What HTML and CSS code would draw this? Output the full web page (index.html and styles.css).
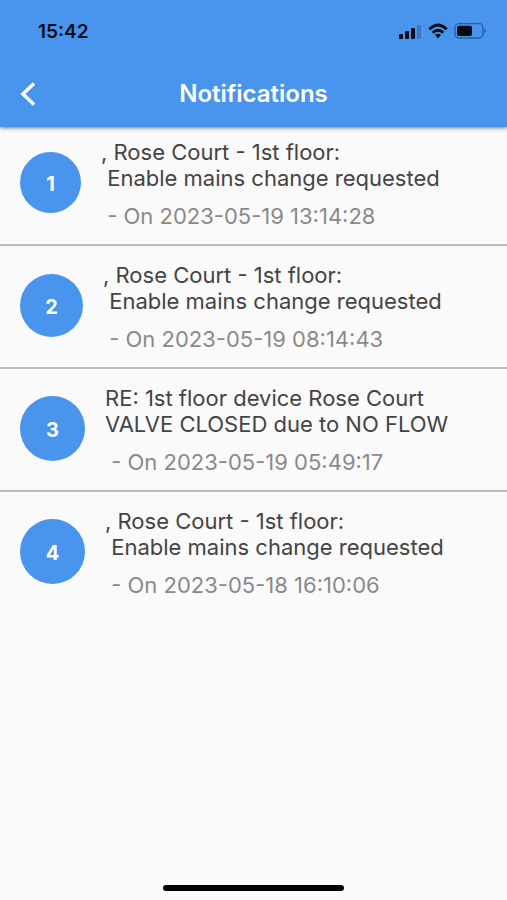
FILE: index.html
```html
<!DOCTYPE html>
<html lang="en">
<head>
<meta charset="utf-8">
<meta name="viewport" content="width=device-width, initial-scale=1">
<title>Notifications</title>
<link rel="stylesheet" href="styles.css">
</head>
<body>
<header class="top">
  <div class="status">
    <time class="clock">15:42</time>
    <div class="indicators">
      <svg width="24" height="16" viewBox="0 0 24 16" aria-hidden="true"><rect x="1" y="11" width="4" height="5" rx="1"/><rect x="7" y="8" width="4" height="8" rx="1"/><rect x="13" y="5" width="4" height="11" rx="1"/><rect x="19" y="2" width="4" height="14" rx="1" opacity=".2"/></svg>
      <svg width="20" height="16" viewBox="0 0 20 16" aria-hidden="true"><path d="M1.300 6.200Q10-2.200 18.700 6.200M4.700 9.700Q10 4.800 15.300 9.700" fill="none" stroke="#050c14" stroke-width="2.800"/><path d="M7 12Q10 9.500 13 12L10 15.200Z"/></svg>
      <svg width="32" height="16" viewBox="0 0 32 16" aria-hidden="true"><rect x="1" y=".7" width="28" height="14.300" rx="4" fill="none" stroke="#050c14" stroke-opacity=".4" stroke-width="1.300"/><rect x="3" y="2.700" width="15" height="10.300" rx="2"/><path d="M30.500 5.500Q33 7.700 30.500 10Z" opacity=".5"/></svg>
    </div>
  </div>
  <div class="bar">
    <button class="back" aria-label="Back"><svg width="16" height="26" viewBox="0 0 16 26" aria-hidden="true"><path d="M14 2.500L3 13L14 23.500"/></svg></button>
    <h1>Notifications</h1>
  </div>
</header>
<main>
  <ol class="list">
    <li><span class="number small">1</span><div><p class="message">, Rose Court - 1st floor:<br>&nbsp;Enable mains change requested</p><p class="date">&nbsp;- On 2023-05-19 13:14:28</p></div></li>
    <li><span class="number medium">2</span><div><p class="message">, Rose Court - 1st floor:<br>&nbsp;Enable mains change requested</p><p class="date">&nbsp;- On 2023-05-19 08:14:43</p></div></li>
    <li><span class="number">3</span><div><p class="message">RE: 1st floor device Rose Court<br>VALVE CLOSED due to NO FLOW</p><p class="date">&nbsp;- On 2023-05-19 05:49:17</p></div></li>
    <li><span class="number">4</span><div><p class="message">, Rose Court - 1st floor:<br>&nbsp;Enable mains change requested</p><p class="date">&nbsp;- On 2023-05-18 16:10:06</p></div></li>
  </ol>
</main>
<footer><span class="home"></span></footer>
</body>
</html>
```
FILE: styles.css
```css
* { box-sizing: border-box; }
body { margin: 0; min-height: 100vh; display: flex; flex-direction: column; background: #fafafa; color: #444; font-family: Inter, "Liberation Sans", sans-serif; }
.top { background: #4994ec; box-shadow: 0 1px 4px #0008; padding-bottom: 1px; }
.status { height: 62px; padding: 0 21px 0 38px; display: flex; align-items: center; justify-content: space-between; }
.clock { color: #050c14; font-size: 19px; font-weight: 600; }
.indicators { display: flex; gap: 6px; align-items: center; fill: #050c14; }
.indicators svg { display: block; }
.bar { display: grid; grid-template-columns: 56px 1fr 56px; align-items: center; height: 64px; color: #fff; }
.back { border: 0; padding: 0 0 0 20px; background: none; display: flex; }
.back path { fill: none; stroke: #fff; stroke-width: 3.500; }
h1 { margin: 0; font-size: 24px; line-height: 30px; font-weight: 600; text-align: center; }
main { flex: 1; }
.list { margin: 0; padding: 0; list-style: none; }
li { display: flex; align-items: center; padding: 16px 20px 15px; border-bottom: 2px solid #bbb; gap: 20px; }
li:first-child { padding-top: 12px; }
li:last-child { border: 0; }
.number { display: grid; place-items: center; width: 65px; height: 65px; margin-bottom: 3px; padding-top: 3px; border-radius: 50%; background: #4994ec; color: #fff; font-weight: 700; font-size: 20px; flex-shrink: 0; }
.small { width: 61px; height: 61px; }
.medium { width: 63px; height: 63px; }
p { margin: 0; }
.message { font-size: 22px; line-height: 26px; }
.date { margin-top: 12px; color: #8a8a8a; font-size: 22px; line-height: 26px; }
footer { display: flex; justify-content: center; padding-bottom: 9px; }
.home { width: 181px; height: 6px; border-radius: 3px; background: #000; }
```
